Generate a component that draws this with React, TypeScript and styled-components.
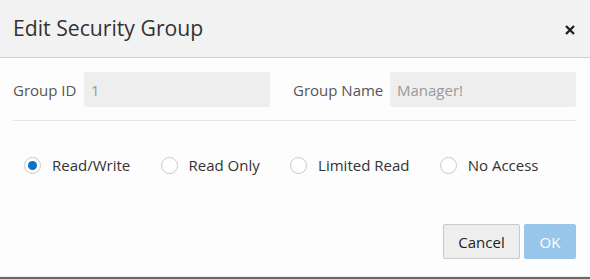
import React, { useState } from "react";
import styled, { createGlobalStyle } from "styled-components";

const Global = createGlobalStyle`
  html, body { margin: 0; padding: 0; background: #fdfdfd; }
  body { font-family: "Open Sans", "Noto Sans", Arial, sans-serif; color: #333; }
  * { box-sizing: border-box; }
`;

const Modal = styled.div`
  width: 590px;
  height: 279px;
  background: #fdfdfd;
  display: flex;
  flex-direction: column;
  border-bottom: 2px solid #6a6a6a;
`;

const Header = styled.div`
  height: 58px;
  flex: none;
  background: #f2f2f2;
  border-bottom: 1px solid #cfcfcf;
  display: flex;
  align-items: center;
  justify-content: space-between;
  padding: 0 15px 0 13px;
`;

const Title = styled.h1`
  margin: 0;
  font-size: 21.2px;
  font-weight: 400;
  color: #333;
  line-height: 1;
  padding-bottom: 1px;
`;

const CloseButton = styled.button`
  border: 0;
  background: transparent;
  padding: 0;
  width: 10px;
  height: 10px;
  display: flex;
  align-items: center;
  justify-content: center;
  cursor: pointer;
  margin-top: 2px;
`;

const Body = styled.div`
  flex: 1;
  display: flex;
  flex-direction: column;
  padding: 14px 14px 0 13px;
`;

const FieldRow = styled.div`
  display: flex;
  gap: 23px;
  padding-bottom: 13px;
  border-bottom: 1px solid #e5e5e5;
`;

const Field = styled.label<{ $labelWidth: number }>`
  display: grid;
  grid-template-columns: ${(p) => p.$labelWidth}px 186px;
  align-items: center;
`;

const FieldLabel = styled.span`
  font-size: 15px;
  color: #555;
`;

const TextInput = styled.input`
  height: 35px;
  width: 186px;
  border: 0;
  border-radius: 2px;
  background: #eeeeee;
  padding: 0 7px;
  font-family: inherit;
  font-size: 15px;
  color: #999;
  outline: none;
`;

const RadioGroup = styled.div`
  display: flex;
  align-items: center;
  gap: 30.3px;
  padding: 34px 0 0 11px;
`;

const RadioItem = styled.label`
  display: flex;
  align-items: center;
  gap: 11px;
  cursor: pointer;
  font-size: 15px;
  color: #333;
`;

const RadioCircle = styled.span<{ $checked: boolean }>`
  width: 17px;
  height: 17px;
  border-radius: 50%;
  border: 1px solid #c8c8c8;
  background: #fff;
  display: flex;
  align-items: center;
  justify-content: center;
  flex: none;
  &::after {
    content: "";
    width: 9px;
    height: 9px;
    border-radius: 50%;
    background: ${(p) => (p.$checked ? "#0b72c7" : "transparent")};
  }
`;

const HiddenRadio = styled.input`
  display: none;
`;

const Footer = styled.div`
  margin-top: auto;
  display: flex;
  justify-content: flex-end;
  gap: 4px;
  padding: 0 14px 17px 0;
  border-bottom: 1px solid #ececec;
`;

const Button = styled.button<{ $primary?: boolean }>`
  height: 35px;
  padding: 0;
  width: ${(p) => (p.$primary ? 52 : 77)}px;
  border-radius: 2px;
  font-family: inherit;
  font-size: 15px;
  border: 1px solid ${(p) => (p.$primary ? "#98c6ea" : "#c9c9c9")};
  background: ${(p) => (p.$primary ? "#98c6ea" : "#eeeeee")};
  color: ${(p) => (p.$primary ? "#ffffff" : "#222")};
  cursor: ${(p) => (p.$primary ? "default" : "pointer")};
`;

const options = ["Read/Write", "Read Only", "Limited Read", "No Access"];

export default function App() {
  const [value, setValue] = useState("Read/Write");
  return (
    <>
      <Global />
      <Modal>
        <Header>
          <Title>Edit Security Group</Title>
          <CloseButton aria-label="Close">
            <svg width="10" height="10" viewBox="0 0 10 10">
              <path d="M1 1 L9 9 M9 1 L1 9" stroke="#222" strokeWidth="2.4" strokeLinecap="butt" />
            </svg>
          </CloseButton>
        </Header>
        <Body>
          <FieldRow>
            <Field $labelWidth={71}>
              <FieldLabel>Group ID</FieldLabel>
              <TextInput value="1" readOnly />
            </Field>
            <Field $labelWidth={97}>
              <FieldLabel>Group Name</FieldLabel>
              <TextInput value="Manager!" readOnly />
            </Field>
          </FieldRow>
          <RadioGroup>
            {options.map((o) => (
              <RadioItem key={o}>
                <HiddenRadio type="radio" name="access" checked={value === o} onChange={() => setValue(o)} />
                <RadioCircle $checked={value === o} />
                {o}
              </RadioItem>
            ))}
          </RadioGroup>
        </Body>
        <Footer>
          <Button>Cancel</Button>
          <Button $primary disabled>OK</Button>
        </Footer>
      </Modal>
    </>
  );
}
